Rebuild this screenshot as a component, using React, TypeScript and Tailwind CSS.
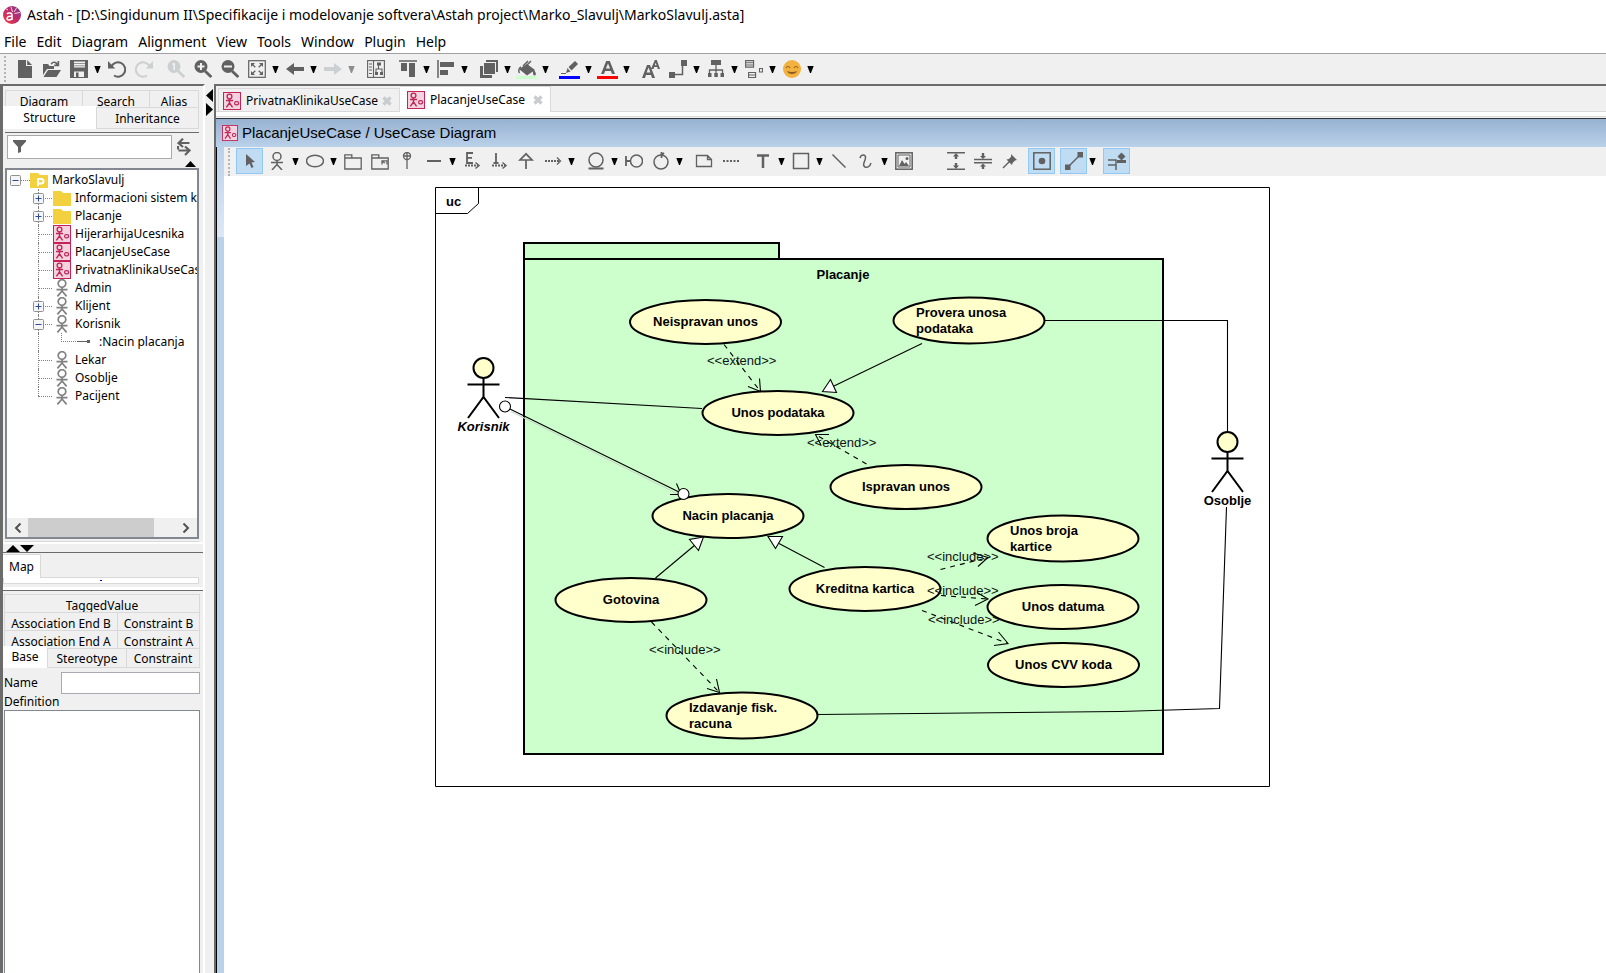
import React from "react";

type IconProps = { children: React.ReactNode; className?: string };

function Icon({ children, className = "text-[#616161]" }: IconProps) {
  return (
    <svg
      viewBox="0 0 18 18"
      aria-hidden="true"
      className={`h-[18px] w-[18px] shrink-0 ${className}`}
      fill="none"
      stroke="currentColor"
      strokeWidth="1.5"
    >
      {children}
    </svg>
  );
}

const solid = { fill: "currentColor", stroke: "none" } as const;

function UseCaseIcon({ className }: { className: string }) {
  return (
    <svg viewBox="0 0 18 18" aria-hidden="true" className={`shrink-0 ${className}`} fill="none" stroke="#c2245a">
      <rect x="0.5" y="0.5" width="17" height="17" fill="#f3d3dd" />
      <circle cx="6.5" cy="4.5" r="2.4" strokeWidth="1.3" />
      <path d="M3 8.5h7M6.5 7v4.2M6.5 10.8L3.4 15.4M6.5 10.8l3.1 4.6" strokeWidth="1.4" />
      <rect x="11.6" y="9.6" width="4" height="3.3" rx="1.6" strokeWidth="1.2" />
    </svg>
  );
}

function ActorIcon() {
  return (
    <svg viewBox="0 0 18 18" aria-hidden="true" className="h-[18px] w-[18px] shrink-0" fill="none" stroke="#808080" strokeWidth="1.7">
      <circle cx="9" cy="4.5" r="3.8" />
      <path d="M3.5 10.7h11M9 8.3v4M9 12L4.4 17.4M9 12l4.6 5.4" />
    </svg>
  );
}

function FolderIcon({ project = false }: { project?: boolean }) {
  return (
    <svg viewBox="0 0 18 18" aria-hidden="true" className="h-[18px] w-[18px] shrink-0">
      <path d="M0 2h8l2 2h8v13H0z" fill="#f3d03e" />
      {project && <path d="M8 15V8h3.2a2.2 2.2 0 0 1 0 4.6H8" fill="none" stroke="#fff" strokeWidth="2" />}
    </svg>
  );
}

function LinkIcon() {
  return (
    <svg viewBox="0 0 16 18" aria-hidden="true" className="h-[18px] w-4 shrink-0">
      <path d="M1 8.5h12" stroke="#616161" />
      <rect x="11" y="7" width="3" height="3" fill="#616161" />
    </svg>
  );
}

/* ---------- main toolbar glyphs ---------- */
const glyphs: Record<string, React.ReactNode> = {
  New: <g {...solid}><path d="M2 0h8v6h6v12H2z" /><path d="M11.200 0L16 5h-4.800z" /></g>,
  Open: (
    <g {...solid}>
      <path d="M0 4h5l1.500 2H11v3H4L0 15z" />
      <path d="M5 10h13l-4.500 7H0.500z" />
      <path d="M7.500 4C9 .8 13 .8 14.500 3.500V1h1.700v5.200h-5V4.600h2C12 2.600 10 2.600 9 4.500z" />
    </g>
  ),
  Save: (
    <g>
      <path d="M0 0h18v18H0z" {...solid} />
      <path d="M4 1.500h11v6H4zM4 11.500h10v5.500H4z" fill="#f0f0f0" stroke="none" />
      <path d="M4 3.500h11M4 5.800h11" stroke="#8a8a8a" strokeWidth=".9" />
      <path d="M6 12.500h2.500V17H6z" {...solid} />
    </g>
  ),
  Undo: <g><path d="M3.200 7A7.200 7.200 0 1 1 6 15.500" strokeWidth="2" /><path d="M0 1v7.500h7.200z" {...solid} /></g>,
  Redo: <g><path d="M14.800 7A7.200 7.200 0 1 0 12 15.500" strokeWidth="2" /><path d="M18 1v7.500h-7.200z" {...solid} /></g>,
  "Actual size": <g><circle cx="7" cy="6.500" r="6.500" {...solid} /><path d="M11 11l6.300 6" strokeWidth="2.800" /><path d="M7.200 3v7M5.500 4.500l1.700-1" stroke="#f0f0f0" strokeWidth="1.600" /></g>,
  "Zoom in": <g><circle cx="7" cy="6.500" r="6.500" {...solid} /><path d="M11 11l6.300 6" strokeWidth="2.800" /><path d="M7 3v7M3.500 6.500h7" stroke="#f0f0f0" strokeWidth="2" /></g>,
  "Zoom out": <g><circle cx="7" cy="6.500" r="6.500" {...solid} /><path d="M11 11l6.300 6" strokeWidth="2.800" /><path d="M3 6.500h8" stroke="#f0f0f0" strokeWidth="2" /></g>,
  Fit: (
    <g>
      <rect x=".7" y=".7" width="16.600" height="16.600" strokeWidth="1.200" />
      <path d="M3 3h4L3 7zM15 3h-4l4 4zM3 15h4l-4-4zM15 15h-4l4-4z" {...solid} />
      <path d="M4 4l3.300 3.300M14 4l-3.300 3.300M4 14l3.300-3.300M14 14l-3.300-3.300" strokeWidth="1.300" />
    </g>
  ),
  Back: <path d="M0 9l8-6v4h10v4H8v4z" {...solid} />,
  Forward: <path d="M18 9l-8-6v4H0v4h10v4z" {...solid} />,
  Structure: (
    <g strokeWidth="1.100">
      <rect x=".6" y=".6" width="16.800" height="16.800" />
      <path d="M6.500 0v18M2 4h3M2 7h3M2 10h3M2 13.500h3M11.500 5v4M9 13V9h6v4" />
      <path d="M10 2.500h4v3h-4zM8 12h3v3H8zM13 12h3v3h-3z" {...solid} />
    </g>
  ),
  "Align top": <g><path d="M0 1h18" /><path d="M2 3h6v8H2zM10 3h6v14h-6z" {...solid} /></g>,
  "Align left": <g><path d="M1 0v18" /><path d="M3 2h14v5H3zM3 10h8v5H3z" {...solid} /></g>,
  Order: <g {...solid}><path d="M6 0h12v12h-2V2H6z" /><path d="M4 3h11v11H4z" /><path d="M0 6h3v9h9v3H0z" /></g>,
  Fill: (
    <g>
      <path d="M1 9l8-5 8 6-8 5.500zM15 9c3 3 4 6 1.500 6.500C14.500 15 15 12 15 9z" {...solid} />
      <path d="M5 6l5-5M8 6l5-5M3 7c-2 1-3 4-1.500 6" />
    </g>
  ),
  Line: <g><path d="M5 13l1.500-5L14 1l3 3-7.500 7.500z" {...solid} /><path d="M6.500 7l4 4.500" stroke="#f0f0f0" /><path d="M0 13.500h5" strokeWidth="1" /></g>,
  Text: <path d="M2 14L7.200 1h3.600L16 14h-3l-1.100-3H6.100L5 14zM6.900 8.600h4.200L9 3.400z" {...solid} />,
  Font: <path d="M0 18L5 5h3l5 13h-3l-.9-3H3.900L3 18zM4.600 12.600h3.800L6.500 7.500zM9 9l3.800-9h2L18 9h-2.200l-.6-2h-3l-.7 2zM12.800 5.300h1.800l-.9-2.600z" {...solid} />,
  Connector: <g><path d="M3 14.500h10.500V4" /><path d="M0 12h6v6H0zM12 0h6v6h-6z" {...solid} /></g>,
  Tree: <g><path d="M9 4v9M2.500 14V10h13v4" strokeWidth="1.300" /><path d="M4 0h10v5H4zM1 13h3.500v4H1zM7.300 13h3.500v4H7.300zM13.500 13H17v4h-3.500z" {...solid} /></g>,
  Boxes: <g strokeWidth="1.100"><path d="M.6.600h8v6.500h-8zM.6 2.800h8M.6 5h8M3.600 12.500h7v5h-7zM3.600 15h7M14.500 8.500h3v3.500h-3z" /></g>,
  Smiley: (
    <g>
      <circle cx="9" cy="9" r="9" fill="#f3b13f" stroke="none" />
      <path d="M3 8c.8-2 3-2 4 0M11 8c.8-2 3-2 4 0" stroke="#9a6420" strokeWidth="1.100" />
      <path d="M4 11c1 4 9 4 10 0-3 1.300-7 1.300-10 0z" fill="#8a5a1c" stroke="none" />
    </g>
  ),
};

/* ---------- diagram toolbar glyphs ---------- */
const tools: Record<string, React.ReactNode> = {
  Select: <path d="M5 2l9 8-3.500.5 2 4.500-2 1-2-4.500L5 14z" {...solid} />,
  Actor: <g><circle cx="9" cy="4.500" r="4" /><path d="M3 10.500h12M9 8.500V13M9 12.500L4 18M9 12.500l5 5.500" /></g>,
  UseCase: <ellipse cx="9" cy="9" rx="8.500" ry="5.800" />,
  Package: <path d="M.8 17V2.800h7V6h9.400v11zM.8 6h7" strokeWidth="1.300" />,
  "Sub package": <g strokeWidth="1.300"><path d="M.8 17V2.800h7V6h9.400v11zM.8 6h7" /><path d="M11 12.500V8.800h5v3.700M11 9.500l3 1.500" /></g>,
  Containment: <g strokeWidth="1.300"><circle cx="9" cy="4" r="3.500" /><path d="M9 0v17M5.500 4h7" /></g>,
  Association: <path d="M2 9h14" strokeWidth="2" />,
  Extend: <g><path d="M10 1H4v10h6M4 5.800h5" strokeWidth="1.800" /><path d="M2 13.500h13" strokeWidth="2" strokeDasharray="2 1" /><path d="M12.500 10.500l3.500 3-3.500 3" /></g>,
  Include: <g><path d="M6 1v10M3.500 11h5" strokeWidth="1.800" /><path d="M2 13.500h13" strokeWidth="2" strokeDasharray="2 1" /><path d="M12.500 10.500l3.500 3-3.500 3" /></g>,
  Generalization: <path d="M9 17V8M9 1.800L3 8h12z" strokeWidth="1.700" />,
  Dependency: <g><path d="M1 9h14" strokeWidth="2" strokeDasharray="2 1" /><path d="M13 5.500L16.500 9 13 12.500" strokeWidth="1.300" /></g>,
  Entity: <g><circle cx="9" cy="8" r="7" /><path d="M1.500 16.500h15" strokeWidth="2" /></g>,
  Boundary: <g><circle cx="11.500" cy="9" r="6" /><path d="M1 4v10M1 9h4.500" strokeWidth="1.800" /></g>,
  Control: <g><circle cx="9" cy="10" r="7" /><path d="M9.500 0v6M9.500 3L12 1" strokeWidth="1.800" /></g>,
  Note: <path d="M1.500 3.500h11l4 4v7h-15zM12.500 3.500v4h4" strokeWidth="1.300" />,
  Anchor: <path d="M1 9h16" strokeWidth="2" strokeDasharray="2 1.500" />,
  Label: <path d="M3 3.500h12M9 3v13" strokeWidth="2.500" />,
  Rectangle: <rect x="1.500" y="1.500" width="15" height="15" />,
  "Free line": <path d="M2.500 2.500l13 13" />,
  Curve: <path d="M3 6C4 2 9 2 8.500 6S4.500 13 8 15c3 1 5-1 6-4" />,
  Image: <g><rect x=".8" y=".8" width="16.400" height="16.400" /><path d="M3 15V3h12v12z" strokeWidth="1" /><path d="M4 14l3-6 2.500 4 1.500-2 3 4z" {...solid} /><circle cx="12" cy="6.500" r="1.500" {...solid} /></g>,
  Expand: <g><path d="M0 .700h18M0 17.300h18" /><path d="M9 1l3 3.500H10.200V7H7.800V4.500H6zM9 17l3-3.500h-1.800V11H7.800v2.500H6z" {...solid} /></g>,
  Compress: <g><path d="M0 7.500h18M0 10.800h18" /><path d="M9 7L6 4h1.800V1h2.400v3H12zM9 11.500l3 3h-1.800V17H7.800v-2.500H6z" {...solid} /></g>,
  Pin: <g><path d="M10 2l6 6-2 .5-2.500 2.500L11 13 5.500 7.500 8 7l2.200-2.500z" {...solid} /><path d="M2 16l6.500-6.500" /></g>,
  Focus: <g><rect x=".8" y=".8" width="16.400" height="16.400" /><circle cx="9" cy="9" r="3.300" {...solid} /></g>,
  Route: <g><path d="M3 15L15 3" /><path d="M0 12.500h5.500V18H0zM12.500 0H18v5.500h-5.500z" {...solid} /></g>,
  Snap: <g><path d="M0 8h8v10M0 13h8" /><path d="M9 8h9v3H9z" {...solid} /><path d="M13.500.500l4 4-4 4-4-4z" {...solid} /></g>,
};

function Caret({ dim = false }: { dim?: boolean }) {
  return (
    <button type="button" aria-label="More options" className="flex h-[26px] w-[11px] items-center justify-center">
      <svg viewBox="0 0 7 7" aria-hidden="true" className="h-[7px] w-[7px]">
        <path d="M.3 0h6.400L4 7H3z" fill={dim ? "#8c8c8c" : "#000"} />
      </svg>
    </button>
  );
}

function Grip() {
  return <span className="ml-1 flex-none self-stretch border-l-2 border-dotted border-[#b4b4b4]" />;
}

type Tool = { name: string; caret?: boolean; gap?: "s" | "l"; dim?: boolean; bar?: string; active?: boolean };

const mainTools: Tool[] = [
  { name: "New" }, { name: "Open" }, { name: "Save", caret: true }, { name: "Undo" }, { name: "Redo", dim: true },
  { name: "Actual size", dim: true, gap: "s" }, { name: "Zoom in" }, { name: "Zoom out" }, { name: "Fit", caret: true },
  { name: "Back", caret: true }, { name: "Forward", caret: true, dim: true }, { name: "Structure", gap: "s" },
  { name: "Align top", caret: true, gap: "s" }, { name: "Align left", caret: true }, { name: "Order", caret: true, gap: "s" },
  { name: "Fill", caret: true, bar: "bg-[#ccffcc]" }, { name: "Line", caret: true, gap: "s", bar: "bg-[#0000ff]" },
  { name: "Text", caret: true, bar: "bg-[#ff0000]" }, { name: "Font", gap: "s" }, { name: "Connector", caret: true },
  { name: "Tree", caret: true }, { name: "Boxes", caret: true }, { name: "Smiley", caret: true },
];

const diagramTools: Tool[] = [
  { name: "Select", active: true }, { name: "Actor", caret: true }, { name: "UseCase", caret: true }, { name: "Package" },
  { name: "Sub package" }, { name: "Containment" }, { name: "Association", caret: true }, { name: "Extend" }, { name: "Include" },
  { name: "Generalization" }, { name: "Dependency", caret: true }, { name: "Entity", caret: true, gap: "s" }, { name: "Boundary" },
  { name: "Control", caret: true }, { name: "Note", gap: "s" }, { name: "Anchor" }, { name: "Label", caret: true, gap: "s" },
  { name: "Rectangle", caret: true }, { name: "Free line" }, { name: "Curve", caret: true }, { name: "Image" },
  { name: "Expand", gap: "l" }, { name: "Compress" }, { name: "Pin" }, { name: "Focus", active: true, gap: "s" },
  { name: "Route", active: true, caret: true, gap: "s" }, { name: "Snap", active: true, gap: "s" },
];

function ToolItem({ tool, set }: { tool: Tool; set: Record<string, React.ReactNode> }) {
  const gap = tool.gap === "s" ? "ml-[5px]" : tool.gap === "l" ? "ml-[25px]" : "";
  return (
    <div className={`flex flex-none items-center ${gap}`}>
      <button
        type="button"
        aria-label={tool.name}
        className={`relative flex h-[26px] w-[27px] items-center justify-center ${tool.active ? "border border-[#90c8f6] bg-[#c0dcf3]" : ""}`}
      >
        {tool.bar && <span className={`absolute bottom-[3px] left-[3px] h-[3px] w-[21px] ${tool.bar}`} />}
        <Icon className={tool.dim ? "text-[#cdd0d0]" : "text-[#616161]"}>{set[tool.name]}</Icon>
      </button>
      {tool.caret && <Caret dim={tool.dim} />}
    </div>
  );
}

function SideTab({ label, className }: { label: string; className: string }) {
  return (
    <button
      type="button"
      role="tab"
      className={`flex items-start justify-center border-t border-l border-[#d9d9d9] bg-[#f0f0f0] whitespace-nowrap ${className}`}
    >
      {label}
    </button>
  );
}

function Expander({ open }: { open: boolean }) {
  return (
    <svg viewBox="0 0 11 11" aria-hidden="true" className="h-[11px] w-[11px] shrink-0">
      <rect x=".5" y=".5" width="10" height="10" rx="1" fill="#f5f5f5" stroke="#919191" />
      <path d={open ? "M2.500 5.500h6" : "M2.500 5.500h6M5.500 2.500v6"} stroke="#2b4a9b" />
    </svg>
  );
}

type Row = { label: string; icon: "folder" | "case" | "actor"; box?: "open" | "closed"; last?: boolean };
const rows: Row[] = [
  { label: "Informacioni sistem k", icon: "folder", box: "closed" },
  { label: "Placanje", icon: "folder", box: "closed" },
  { label: "HijerarhijaUcesnika", icon: "case" },
  { label: "PlacanjeUseCase", icon: "case" },
  { label: "PrivatnaKlinikaUseCas", icon: "case" },
  { label: "Admin", icon: "actor" },
  { label: "Klijent", icon: "actor", box: "closed" },
  { label: "Korisnik", icon: "actor", box: "open" },
  { label: "Lekar", icon: "actor" },
  { label: "Osoblje", icon: "actor" },
  { label: "Pacijent", icon: "actor", last: true },
];

function Branch({ box, last }: { box?: "open" | "closed"; last?: boolean }) {
  return (
    <span className="relative flex h-[18px] w-5 shrink-0 items-center">
      <span className={`absolute top-0 left-[5px] border-l border-dotted border-[#808080] ${last ? "h-[9px]" : "h-[18px]"}`} />
      <span className="absolute top-[9px] left-[5px] w-[14px] border-t border-dotted border-[#808080]" />
      {box && <span className="relative"><Expander open={box === "open"} /></span>}
    </span>
  );
}

function Tree() {
  return (
    <ul className="flex-1 overflow-hidden pt-px text-[12px] leading-[18px] whitespace-nowrap">
      <li className="flex h-[18px] items-center pl-[3px]">
        <Expander open />
        <span className="w-[9px] border-t border-dotted border-[#808080]" />
        <FolderIcon project />
        <span className="pl-1">MarkoSlavulj</span>
      </li>
      {rows.map((r) => (
        <React.Fragment key={r.label}>
          <li className="flex h-[18px] items-center pl-[26px]">
            <Branch box={r.box} last={r.last} />
            {r.icon === "folder" && <FolderIcon />}
            {r.icon === "case" && <UseCaseIcon className="h-[18px] w-[18px]" />}
            {r.icon === "actor" && <ActorIcon />}
            <span className="pl-1">{r.label}</span>
          </li>
          {r.label === "Korisnik" && (
            <li className="flex h-[18px] items-center pl-[26px]">
              <span className="ml-[5px] h-[18px] w-[23px] border-l border-dotted border-[#808080]" />
              <span className="h-[9px] w-[15px] self-start border-b border-l border-dotted border-[#808080]" />
              <LinkIcon />
              <span className="pl-[7px]">:Nacin placanja</span>
            </li>
          )}
        </React.Fragment>
      ))}
    </ul>
  );
}

function Triangle({ d, className }: { d: string; className: string }) {
  return (
    <svg viewBox="0 0 12 12" preserveAspectRatio="none" aria-hidden="true" className={className}>
      <path d={d} fill="#000" />
    </svg>
  );
}

function Sidebar() {
  return (
    <aside className="flex w-[205px] flex-none flex-col border-t-2 border-r-2 border-l-3 border-t-[#6b6b6b] border-r-white border-l-[#6b6b6b] text-[12px]">
      <section className="flex h-[456px] flex-none flex-col pt-1 pr-1 pl-[2px]">
        <div role="tablist">
          <div className="flex h-[17px] border-r border-[#d9d9d9] leading-[22px]">
            <SideTab label="Diagram" className="w-[77px]" />
            <SideTab label="Search" className="w-[67px]" />
            <SideTab label="Alias" className="flex-1" />
          </div>
          <div className="relative flex h-[22px] border-r border-[#d9d9d9]">
            <button type="button" role="tab" aria-selected="true" className="-mt-px -ml-[2px] h-[23px] w-[93px] bg-white leading-[22px]">
              Structure
            </button>
            <SideTab label="Inheritance" className="flex-1 border-b leading-[22px]" />
          </div>
        </div>
        <div className="mt-[3px] flex h-[28px] items-center border-t border-[#6b6b6b] pl-[2px]">
          <label className="flex h-6 w-[165px] items-center border border-[#a9a9a9] bg-white pl-[5px]">
            <svg viewBox="0 0 13 13" aria-hidden="true" className="h-[13px] w-[13px] shrink-0">
              <path d="M0 0h13v1.500L8 7v5L5 13V7L0 1.500z" fill="#616161" />
            </svg>
            <input aria-label="Filter" className="min-w-0 flex-1 bg-transparent outline-none" />
          </label>
          <button type="button" aria-label="Refresh" className="ml-[5px] flex">
            <svg viewBox="0 0 14 18" aria-hidden="true" className="h-[18px] w-[14px]" fill="none" stroke="#616161" strokeWidth="2.200">
              <path d="M12.500 5H2M6 .700L1.500 5 6 9M1.500 12.500H12M8 8.500l4.500 4L8 17M1 8v3.500" />
            </svg>
          </button>
        </div>
        <button type="button" aria-label="Collapse filter" className="flex h-[8px] items-center justify-end pr-[3px]">
          <Triangle d="M0 12L6 0l6 12z" className="h-[6px] w-[11px]" />
        </button>
        <div className="flex flex-1 flex-col overflow-hidden border-2 border-[#828790] bg-white">
          <Tree />
          <div className="flex h-[19px] items-center bg-[#f0f0f0]">
            <button type="button" aria-label="Scroll left" className="flex w-[21px] justify-center">
              <svg viewBox="0 0 8 10" aria-hidden="true" className="h-[10px] w-2"><path d="M6.500.500L2 5l4.500 4.500" fill="none" stroke="#505050" strokeWidth="2" /></svg>
            </button>
            <span className="h-full w-[126px] bg-[#cdcdcd]" />
            <span className="flex-1" />
            <button type="button" aria-label="Scroll right" className="flex w-[23px] justify-center">
              <svg viewBox="0 0 8 10" aria-hidden="true" className="h-[10px] w-2"><path d="M1.500.500L6 5 1.500 9.500" fill="none" stroke="#505050" strokeWidth="2" /></svg>
            </button>
          </div>
        </div>
        <div className="h-[3px] border-b border-[#d9d9d9]" />
      </section>

      <div className="flex h-[11px] flex-none items-center border-t-2 border-b border-t-white border-b-[#6b6b6b] pl-[3px]">
        <Triangle d="M0 12L6 0l6 12z" className="h-[7px] w-[14px]" />
        <Triangle d="M0 0h12L6 12z" className="h-[7px] w-[14px]" />
      </div>
      <section className="flex h-[34px] flex-none flex-col pt-px pr-1">
        <div role="tablist" className="flex h-[23px]">
          <button type="button" role="tab" aria-selected="true" className="relative -mb-px w-[38px] border-t border-r border-[#d9d9d9] bg-white leading-[22px]">
            Map
          </button>
        </div>
        <div className="flex h-[7px] items-center justify-center border border-[#d9d9d9] bg-white">
          <span className="h-px w-[2px] bg-[#0000c0]" />
        </div>
      </section>
      <section className="flex min-h-0 flex-1 flex-col border-t-3 border-white">
        <div className="flex min-h-0 flex-1 flex-col border-t border-[#6b6b6b] pt-[3px] pr-[3px]">
          <div role="tablist" className="pl-px">
            <div className="flex h-[18px] border-r border-[#d9d9d9] leading-[22px]">
              <SideTab label="TaggedValue" className="flex-1" />
            </div>
            <div className="relative flex h-[18px] border-r border-[#d9d9d9] leading-[21px]">
              <SideTab label="Association End B" className="w-[113px]" />
              <SideTab label="Constraint B" className="flex-1" />
            </div>
            <div className="relative flex h-[18px] border-r border-[#d9d9d9] leading-[21px]">
              <SideTab label="Association End A" className="w-[113px]" />
              <SideTab label="Constraint A" className="flex-1" />
            </div>
            <div className="relative flex h-[20px] border-r border-[#d9d9d9]">
              <button type="button" role="tab" aria-selected="true" className="-mt-[2px] -ml-px h-[22px] w-[44px] bg-white leading-[20px]">
                Base
              </button>
              <SideTab label="Stereotype" className="w-[79px] border-b leading-[20px]" />
              <SideTab label="Constraint" className="flex-1 border-b leading-[20px]" />
            </div>
          </div>
          <div className="flex items-center pt-1">
            <label htmlFor="el-name" className="w-[58px] pl-px">Name</label>
            <input id="el-name" className="h-[22px] min-w-0 flex-1 border border-[#a9a9b4] bg-white outline-none" />
          </div>
          <label htmlFor="el-def" className="flex h-[16px] items-center pl-px">Definition</label>
          <textarea id="el-def" className="ml-px min-h-0 flex-1 resize-none border border-b-0 border-[#828790] bg-white outline-none" />
        </div>
      </section>
    </aside>
  );
}

/* ---------- diagram ---------- */
function Case({ cx, cy, ry = 22, lines, tx }: { cx: number; cy: number; ry?: number; lines: string[]; tx?: number }) {
  return (
    <g>
      <ellipse cx={cx} cy={cy} rx="75.500" ry={ry} fill="#ffffcc" stroke="#000" strokeWidth="2" />
      {lines.map((t, i) => (
        <text
          key={t}
          x={tx ?? cx}
          y={lines.length > 1 ? cy - 4 + i * 16 : cy + 4}
          textAnchor={tx ? "start" : "middle"}
          fontWeight="700"
        >
          {t}
        </text>
      ))}
    </g>
  );
}

function Person({ x, y }: { x: number; y: number }) {
  return (
    <g stroke="#000" strokeWidth="2" fill="none">
      <circle cx={x} cy={y} r="10" fill="#ffffcc" />
      <path d={`M${x} ${y + 10}v19M${x - 16} ${y + 16.5}h32M${x - 15.5} ${y + 50}L${x} ${y + 29}l15.500 21`} />
    </g>
  );
}

function Diagram() {
  return (
    <svg
      viewBox="224 176 1060 620"
      role="img"
      aria-label="Use case diagram"
      className="h-[620px] w-[1060px] flex-none font-['Liberation_Sans',Arial,sans-serif] text-[13px]"
    >
      <g fill="none" stroke="#000">
        <path d="M435.500 187.500h834v599h-834z" />
        <path d="M435.500 213.500h32l11-10v-16" />
      </g>
      <text x="446" y="206" fontWeight="700">uc</text>
      <g fill="#ccffcc" stroke="#000" strokeWidth="2">
        <path d="M524 243h255v16H524z" />
        <path d="M524 259h639v495H524z" />
      </g>
      <text x="843" y="279" textAnchor="middle" fontWeight="700">Placanje</text>

      <Person x={483.5} y={368} />
      <Person x={1227.5} y={442} />
      <text x="483.500" y="431" textAnchor="middle" fontWeight="700" fontStyle="italic">Korisnik</text>
      <text x="1227.500" y="505" textAnchor="middle" fontWeight="700">Osoblje</text>

      <Case cx={705.5} cy={322} lines={["Neispravan unos"]} />
      <Case cx={969} cy={320.5} ry={23} tx={916} lines={["Provera unosa", "podataka"]} />
      <Case cx={778} cy={413} lines={["Unos podataka"]} />
      <Case cx={906} cy={487} lines={["Ispravan unos"]} />
      <Case cx={728} cy={516} lines={["Nacin placanja"]} />
      <Case cx={865} cy={589} lines={["Kreditna kartica"]} />
      <Case cx={631} cy={600} lines={["Gotovina"]} />
      <Case cx={742} cy={715.5} ry={23} tx={689} lines={["Izdavanje fisk.", "racuna"]} />
      <Case cx={1063} cy={538.5} ry={23} tx={1010} lines={["Unos broja", "kartice"]} />
      <Case cx={1063} cy={607} lines={["Unos datuma"]} />
      <Case cx={1063.5} cy={665} lines={["Unos CVV koda"]} />

      <path d="M511 411.500L677 493.500" stroke="#c4dcc4" strokeWidth="1.200" />
      <g fill="none" stroke="#000" strokeWidth="1.100">
        <path d="M505 397.500L702 408.500" />
        <path d="M510 409L679 492M676.500 483.500l4 9.500M670 494.500h9" />
        <path d="M922 343.500L834 386" />
        <path d="M655.500 578L695 545" />
        <path d="M824.500 567.500L779 543.500" />
        <path d="M1045 320.500h182.500V432" />
        <path d="M1226.500 507l-7 201.500L1120 711.500 817.500 714.500" />
        <path d="M759.500 378.500l1 13-12.500-5" />
        <path d="M829 434.500h-13.500l5.500 10.500" />
        <path d="M716.500 679l3 13.500-12.500-4" />
        <path d="M973 553l15 4.500-10 9" />
        <path d="M977 592.500l11 6.500-13 6.500" />
        <path d="M998.500 632l9.500 11.500-14 2" />
      </g>
      <g fill="none" stroke="#000" strokeWidth="1.100" strokeDasharray="5 5">
        <path d="M724 344.500l36.500 47" />
        <path d="M866.500 464l-51-29.500" />
        <path d="M651.500 622l68 70.500" />
        <path d="M940.500 569.500L988 557.500" />
        <path d="M941 595.500l47 3.500" />
        <path d="M922 610.500l86 33" />
      </g>
      <g fill="#fff" stroke="#000" strokeWidth="1.100">
        <circle cx="505" cy="406.500" r="5.500" />
        <circle cx="683.500" cy="494" r="5.500" />
        <path d="M822.500 391.500l8-12 6 13z" />
        <path d="M703.500 537l-14 2.500 9 11z" />
        <path d="M768 536.500h14.500l-7 12z" />
      </g>
      <g fill="#111">
        <text x="707" y="365">&lt;&lt;extend&gt;&gt;</text>
        <text x="807" y="447">&lt;&lt;extend&gt;&gt;</text>
        <text x="649" y="654">&lt;&lt;include&gt;&gt;</text>
        <text x="927" y="561">&lt;&lt;include&gt;&gt;</text>
        <text x="927" y="595">&lt;&lt;include&gt;&gt;</text>
        <text x="928" y="624">&lt;&lt;include&gt;&gt;</text>
      </g>
    </svg>
  );
}

function CloseMark() {
  return (
    <svg viewBox="0 0 10 10" aria-hidden="true" className="h-[10px] w-[10px]">
      <path d="M1.500 1.500l7 7M8.500 1.500l-7 7" stroke="#c8cccc" strokeWidth="3.200" />
    </svg>
  );
}

function FileTab({ label, active = false }: { label: string; active?: boolean }) {
  return (
    <div
      role="tab"
      aria-selected={active}
      className={`flex flex-none items-center border-t border-r border-[#d9d9d9] ${active ? "relative -mb-px h-[26px] w-[151px] bg-white pl-[7px]" : "h-[23px] w-[182px] border-l pt-[2px] pl-1"}`}
    >
      <UseCaseIcon className="h-[18px] w-[18px]" />
      <span className="pl-[5px] text-[12px] whitespace-nowrap">{label}</span>
      <button type="button" aria-label={`Close ${label}`} className="ml-auto pr-[7px]">
        <CloseMark />
      </button>
    </div>
  );
}

function Workspace() {
  return (
    <main className="flex min-w-0 flex-1 flex-col border-t-2 border-l-2 border-[#6b6b6b]">
      <div role="tablist" className="flex h-[26px] flex-none items-end border-b border-[#d9d9d9] pl-[2px]">
        <FileTab label="PrivatnaKlinikaUseCase" />
        <FileTab label="PlacanjeUseCase" active />
      </div>
      <div className="h-[5px] flex-none border-b border-[#d9d9d9] bg-white" />
      <h1 className="mt-px flex h-[29px] flex-none items-center border-t border-[#333] bg-linear-to-b from-[#97b1d1] to-[#bad1ea] pl-[6px] font-['Liberation_Sans',Arial,sans-serif] text-[15px]">
        <UseCaseIcon className="h-4 w-4" />
        <span className="pl-1 whitespace-nowrap">PlacanjeUseCase / UseCase Diagram</span>
      </h1>
      <div className="flex min-h-0 flex-1 border-l border-black">
        <div className="flex w-[7px] flex-none flex-col bg-[#bad1ea]">
          <div className="h-[90px] bg-linear-to-b from-[#bad1ea] to-[#dde8f6]" />
        </div>
        <div className="flex min-w-0 flex-1 flex-col overflow-hidden bg-white">
          <div role="toolbar" aria-label="Diagram tools" className="flex h-[29px] flex-none items-start bg-[#f0f0f0] pt-px">
            <Grip />
            <span className="w-[6px] flex-none" />
            {diagramTools.map((t) => (
              <ToolItem key={t.name} tool={t} set={tools} />
            ))}
          </div>
          <Diagram />
        </div>
      </div>
    </main>
  );
}

const menus = ["File", "Edit", "Diagram", "Alignment", "View", "Tools", "Window", "Plugin", "Help"];

export default function App() {
  return (
    <div className="flex h-screen flex-col overflow-hidden bg-[#f0f0f0] font-['Noto_Sans',sans-serif] text-black">
      <header className="flex-none border-b border-[#a0a0a0] bg-white">
        <div className="flex h-[29px] items-center pl-[3px]">
          <svg viewBox="0 0 18 18" aria-hidden="true" className="h-[18px] w-[18px]">
            <defs>
              <linearGradient id="logo" x1="0" y1="1" x2="1" y2="0">
                <stop offset="0" stopColor="#f0413f" />
                <stop offset=".5" stopColor="#c22a68" />
                <stop offset="1" stopColor="#7a3c8e" />
              </linearGradient>
            </defs>
            <circle cx="9" cy="9" r="9" fill="url(#logo)" />
            <path d="M4 8c1-1.500 5-1.500 5 1v5M9 10.500c-6-1-6 4-3 3.500 1.500 0 3-1 3-2.500" fill="none" stroke="#fff" strokeWidth="1.500" />
            <path d="M9.500 6L8 1M11 6l2.500-4M11.500 7.500L17 6.500M5 4L2.500 2.500" stroke="#fff" strokeWidth=".8" />
          </svg>
          <span className="pl-[6px] text-[14px] whitespace-nowrap">
            Astah - [D:\Singidunum II\Specifikacije i modelovanje softvera\Astah project\Marko_Slavulj\MarkoSlavulj.asta]
          </span>
        </div>
        <nav className="flex h-6 items-center gap-[10px] pl-1 text-[14px]">
          {menus.map((m) => (
            <button key={m} type="button">{m}</button>
          ))}
        </nav>
      </header>
      <div role="toolbar" aria-label="Main tools" className="flex h-[30px] flex-none items-center py-[2px]">
        <Grip />
        <span className="w-[5px] flex-none" />
        {mainTools.map((t) => (
          <ToolItem key={t.name} tool={t} set={glyphs} />
        ))}
      </div>
      <div className="flex min-h-0 flex-1">
        <Sidebar />
        <div className="flex w-[9px] flex-none flex-col items-center pt-[5px]">
          <Triangle d="M12 0v12L0 6z" className="h-[13px] w-[7px]" />
          <Triangle d="M0 0v12l12-6z" className="mt-px h-[13px] w-[7px]" />
        </div>
        <Workspace />
      </div>
    </div>
  );
}
